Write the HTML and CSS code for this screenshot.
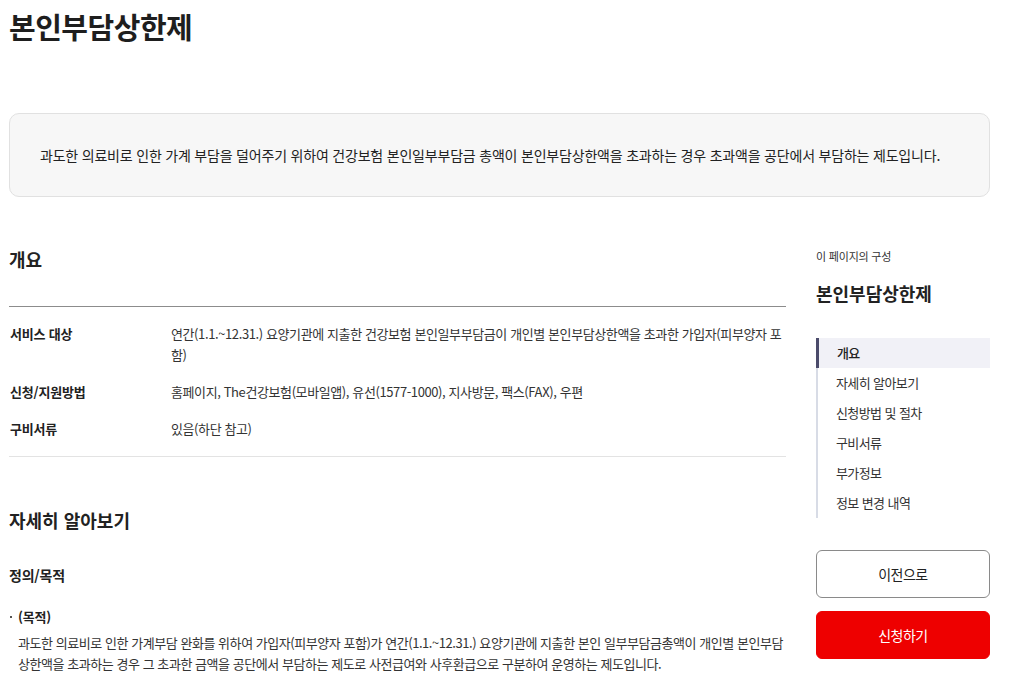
FILE: index.html
```html
<!DOCTYPE html>
<html lang="ko">
<head>
<meta charset="utf-8">
<title>본인부담상한제</title>
<link rel="stylesheet" href="styles.css">
</head>
<body>
<div class="page">
  <h1 class="title">본인부담상한제</h1>
  <div class="summary">과도한 의료비로 인한 가계 부담을 덜어주기 위하여 건강보험 본인일부부담금 총액이 본인부담상한액을 초과하는 경우 초과액을 공단에서 부담하는 제도입니다.</div>
  <div class="layout">
    <main class="main">
      <section class="sec">
        <h2 class="sec-title">개요</h2>
        <dl class="info">
          <div class="row">
            <dt>서비스 대상</dt>
            <dd>연간(1.1.~12.31.) 요양기관에 지출한 건강보험 본인일부부담금이 개인별 본인부담상한액을 초과한 가입자(피부양자 포함)</dd>
          </div>
          <div class="row">
            <dt>신청/지원방법</dt>
            <dd>홈페이지, The건강보험(모바일앱), 유선(1577-1000), 지사방문, 팩스(FAX), 우편</dd>
          </div>
          <div class="row">
            <dt>구비서류</dt>
            <dd>있음(하단 참고)</dd>
          </div>
        </dl>
      </section>
      <section class="sec detail">
        <h2 class="sec-title">자세히 알아보기</h2>
        <h3 class="sub-title">정의/목적</h3>
        <div class="bullet">(목적)</div>
        <p class="para">과도한 의료비로 인한 가계부담 완화를 위하여 가입자(피부양자 포함)가 연간(1.1.~12.31.) 요양기관에 지출한 본인 일부부담금총액이 개인별 본인부담상한액을 초과하는 경우 그 초과한 금액을 공단에서 부담하는 제도로 사전급여와 사후환급으로 구분하여 운영하는 제도입니다.</p>
      </section>
    </main>
    <aside class="side">
      <div class="side-cap">이 페이지의 구성</div>
      <div class="side-title">본인부담상한제</div>
      <ul class="toc">
        <li class="active">개요</li>
        <li>자세히 알아보기</li>
        <li>신청방법 및 절차</li>
        <li>구비서류</li>
        <li>부가정보</li>
        <li>정보 변경 내역</li>
      </ul>
      <div class="btns">
        <button class="btn btn-line">이전으로</button>
        <button class="btn btn-red">신청하기</button>
      </div>
    </aside>
  </div>
</div>
</body>
</html>
```
FILE: styles.css
```css
* { box-sizing: border-box; }
html, body { margin: 0; padding: 0; background: #fff; }
body {
  font-family: "Noto Sans CJK KR", "Noto Sans", sans-serif;
  color: #222;
  letter-spacing: -0.2px;
}
.page { padding: 0 34px 0 9px; }
.title {
  margin: 0;
  padding-top: 4px;
  font-size: 29px;
  font-weight: 700;
  line-height: 44px;
  letter-spacing: -0.5px;
  color: #1e1e1e;
}
.summary {
  margin-top: 65px;
  height: 84px;
  display: flex;
  align-items: center;
  padding: 0 30px;
  background: #f7f7f7;
  border: 1px solid #e1e1e1;
  border-radius: 10px;
  font-size: 14px;
  color: #222;
}
.layout {
  display: flex;
  gap: 30px;
  margin-top: 42px;
}
.main { flex: 0 0 777px; }
.side { flex: 1; padding-top: 8px; }
.sec-title {
  margin: 0;
  font-size: 18px;
  font-weight: 700;
  line-height: 40px;
  letter-spacing: 0;
}
.info {
  margin: 27px 0 0;
  border-top: 1px solid #8c8c8c;
  border-bottom: 1px solid #e3e3e3;
  padding: 16px 0 17px;
}
.row { display: flex; padding: 0 0 16px; font-size: 13px; line-height: 21px; }
.row:last-child { padding-bottom: 0; }
.row dt { width: 162px; font-weight: 700; padding-left: 1px; }
.row dd { margin: 0; flex: 1; color: #333; letter-spacing: -0.4px; }
.detail { margin-top: 43px; }
.sub-title {
  margin: 18px 0 0;
  font-size: 14px;
  font-weight: 700;
  line-height: 34px;
}
.bullet {
  margin-top: 15px;
  font-size: 13px;
  font-weight: 700;
  line-height: 20px;
  position: relative;
  padding-left: 9px;
}
.bullet::before {
  content: "";
  position: absolute;
  left: 1px;
  top: 9px;
  width: 2px;
  height: 2px;
  background: #555;
}
.para {
  margin: 5px 0 0;
  padding-left: 9px;
  font-size: 13px;
  line-height: 21px;
  letter-spacing: -0.45px;
  color: #333;
}
.side-cap { font-size: 11px; color: #333; line-height: 18px; }
.side-title {
  margin-top: 14px;
  font-size: 18px;
  font-weight: 700;
  line-height: 28px;
  letter-spacing: 0;
}
.toc {
  list-style: none;
  margin: 31px 0 0;
  padding: 0;
  border-left: 2px solid #d8dce6;
}
.toc li {
  padding-left: 18px;
  font-size: 13px;
  line-height: 30px;
  letter-spacing: -0.6px;
  color: #333;
}
.toc li.active {
  background: #f1f1f7;
  border-left: 3px solid #4b4b6b;
  margin-left: -2px;
  font-weight: 500;
  color: #222;
}
.btns { margin-top: 32px; display: flex; flex-direction: column; gap: 13px; }
.btn {
  height: 48px;
  border-radius: 6px;
  font-family: inherit;
  font-size: 14px;
  letter-spacing: -0.5px;
  cursor: pointer;
}
.btn-line { background: #fff; border: 1px solid #8a8a8a; color: #222; }
.btn-red { background: #ee0000; border: 1px solid #ee0000; color: #fff; }
```
